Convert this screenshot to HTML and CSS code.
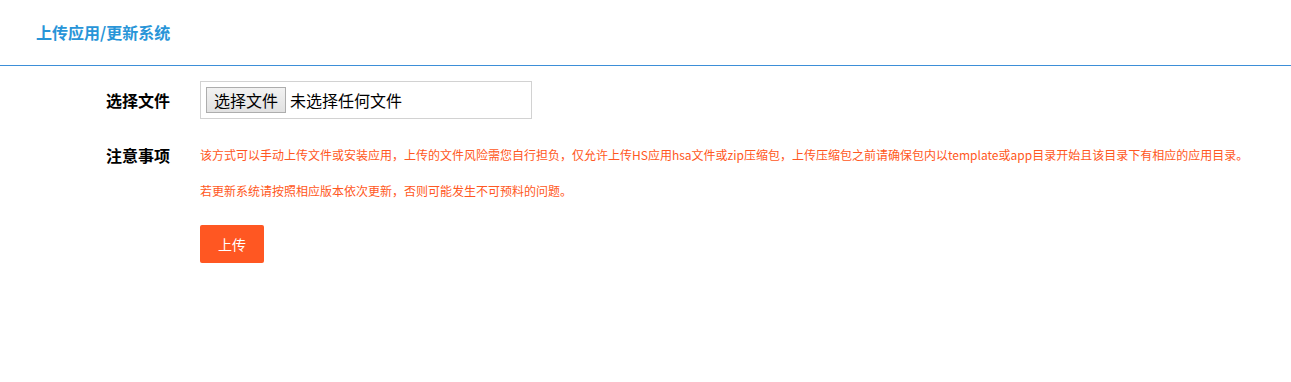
FILE: index.html
```html
<!DOCTYPE html>
<html lang="zh-CN">
<head>
    <meta charset="UTF-8">
    <meta name="viewport" content="width=device-width, initial-scale=1.0">
    <title>上传应用/更新系统</title>
    <link rel="stylesheet" href="styles.css">
</head>
<body>
    <div class="page-header">
        <h2>上传应用/更新系统</h2>
    </div>

    <form class="upload-form" onsubmit="return false">
        <div class="form-row">
            <label class="form-label" for="appFile">选择文件</label>
            <div class="file-box">
                <label class="file-picker">
                    <input type="file" id="appFile" name="appFile" accept=".hsa,.zip">
                    <span class="file-btn">选择文件</span>
                    <span class="file-name">未选择任何文件</span>
                </label>
            </div>
        </div>

        <div class="form-row form-row-top">
            <div class="form-label">注意事项</div>
            <div class="notes">
                <p>该方式可以手动上传文件或安装应用，上传的文件风险需您自行担负，仅允许上传HS应用hsa文件或zip压缩包，上传压缩包之前请确保包内以template或app目录开始且该目录下有相应的应用目录。</p>
                <p>若更新系统请按照相应版本依次更新，否则可能发生不可预料的问题。</p>
                <button type="submit" class="btn-upload">上传</button>
            </div>
        </div>
    </form>
</body>
</html>
```

FILE: styles.css
```css
body {
    margin: 0;
    font-family: "Noto Sans CJK SC", "Noto Sans", sans-serif;
    color: #000;
    background-color: #fff;
}

.page-header {
    height: 65px;
    border-bottom: 1px solid #3d8fd8;
    padding-left: 36px;
}

.page-header h2 {
    margin: 0;
    font-size: 16px;
    line-height: 65px;
    font-weight: bold;
    color: #2895d8;
}

.upload-form {
    padding-top: 15px;
}

.form-row {
    display: flex;
    align-items: center;
    margin-bottom: 18px;
}

.form-row-top {
    align-items: flex-start;
}

.form-label {
    width: 170px;
    margin-right: 30px;
    text-align: right;
    font-size: 16px;
    font-weight: bold;
    line-height: 36px;
}

.file-box {
    width: 320px;
    height: 36px;
    padding: 0 5px;
    border: 1px solid #d2d2d2;
    display: flex;
    align-items: center;
}

.file-picker {
    display: flex;
    align-items: center;
    cursor: pointer;
}

.file-picker input {
    display: none;
}

.file-btn {
    height: 24px;
    padding: 0 7px;
    font-size: 16px;
    line-height: 24px;
    border: 1px solid #adadad;
    background: linear-gradient(#f2f2f2, #e1e1e1);
}

.file-name {
    margin-left: 4px;
    font-size: 16px;
}

.notes p {
    margin: 0;
    font-size: 12px;
    line-height: 36px;
    color: #ff5722;
}

.btn-upload {
    margin-top: 16px;
    height: 38px;
    padding: 0 18px;
    border: none;
    border-radius: 2px;
    background-color: #ff5722;
    color: #fff;
    font-family: inherit;
    font-size: 14px;
    cursor: pointer;
}

.btn-upload:hover {
    opacity: 0.8;
}
```
